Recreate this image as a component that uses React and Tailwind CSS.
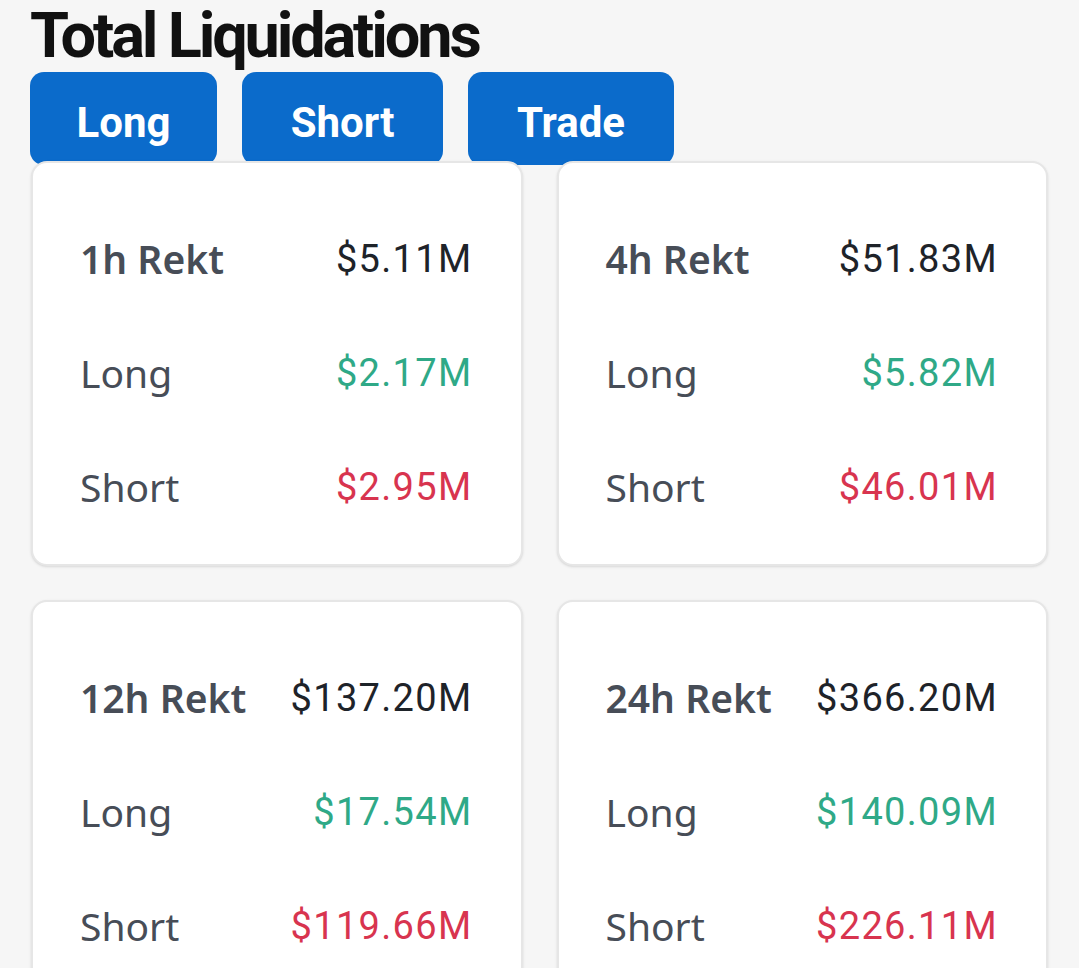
const stats = [
  { label: "1h Rekt", total: "$5.11M", long: "$2.17M", short: "$2.95M" },
  { label: "4h Rekt", total: "$51.83M", long: "$5.82M", short: "$46.01M" },
  { label: "12h Rekt", total: "$137.20M", long: "$17.54M", short: "$119.66M" },
  { label: "24h Rekt", total: "$366.20M", long: "$140.09M", short: "$226.11M" },
];

const Row = ({ label, value, labelClass, valueClass }) => (
  <div className="h-[114px] flex items-center justify-between">
    <span className={`text-[39px] font-['Noto_Sans',sans-serif] ${labelClass}`}>{label}</span>
    <span className={`text-[38px] tracking-[0.035em] -mr-[1px] font-['Roboto',sans-serif] ${valueClass}`}>{value}</span>
  </div>
);

const App = () => {
  return (
    <div className="min-h-screen bg-[#f6f6f6] flex flex-col overflow-hidden">
      {/* title */}
      <h1 className="pt-1 pl-[30px] text-[63px] leading-none font-bold tracking-[-0.05em] text-[#111111] font-['Roboto',sans-serif]">
        Total Liquidations
      </h1>

      {/* tabs */}
      <div className="mt-[5px] pl-[30px] flex gap-[25px]">
        {[
          ["Long", "w-[187px]"],
          ["Short", "w-[201px]"],
          ["Trade", "w-[206px]"],
        ].map(([t, w]) => (
          <button
            key={t}
            className={`${w} h-[93px] rounded-[14px] bg-[#0b6bcb] text-white text-[42px] font-bold font-['Roboto',sans-serif] pt-[8px]`}
          >
            {t}
          </button>
        ))}
      </div>

      {/* cards */}
      <div className="relative -mt-[4px] px-[31px] grid grid-cols-2 gap-x-[34px] gap-y-[34px]">
        {stats.map((s) => (
          <div
            key={s.label}
            className="bg-white border-2 border-[#e6e6e6] rounded-[16px] shadow-sm pl-[47px] pr-[49px] pt-[39px] pb-[20px]"
          >
            <Row
              label={s.label}
              value={s.total}
              labelClass="font-semibold text-[#474d57]"
              valueClass="text-[#1e2329]"
            />
            <Row
              label="Long"
              value={s.long}
              labelClass="text-[#474d57]"
              valueClass="text-[#2fa987]"
            />
            <Row
              label="Short"
              value={s.short}
              labelClass="text-[#474d57]"
              valueClass="text-[#d8344f]"
            />
          </div>
        ))}
      </div>
    </div>
  );
};

export default App;
